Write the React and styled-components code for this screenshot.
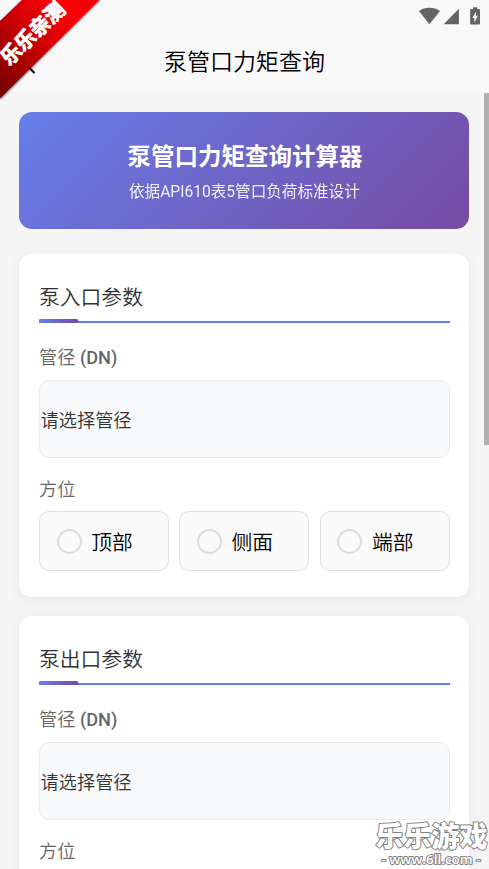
import React from "react";
import styled, { createGlobalStyle } from "styled-components";

const GlobalStyle = createGlobalStyle`
  *, *::before, *::after { box-sizing: border-box; }
  body {
    margin: 0;
    overflow: hidden;
    font-family: Roboto, "Noto Sans CJK SC", sans-serif;
    background: #f5f5f5;
  }
`;

const Screen = styled.div`
  position: relative;
  width: 489px;
  height: 869px;
  overflow: hidden;
  background: #f5f5f5;
`;

const TopBar = styled.header`
  height: 92px;
  background: #f8f8f8;
  display: flex;
  flex-direction: column;
`;

const StatusBar = styled.div`
  height: 32px;
  padding: 7px 8px 0 0;
  display: flex;
  justify-content: flex-end;
`;

const NavBar = styled.div`
  height: 60px;
  display: grid;
  grid-template-columns: 40px 1fr 40px;
  align-items: center;
`;

const BackIcon = styled.svg`
  width: 14px;
  height: 24px;
  margin-left: 22px;
`;

const NavTitle = styled.h1`
  margin: 0;
  padding: 2px 0 0 0;
  font-size: 23px;
  line-height: 34px;
  font-weight: 350;
  text-align: center;
  color: #000;
`;

const Content = styled.main`
  padding: 20px 19.6px 0 19.4px;
`;

const Banner = styled.section`
  height: 116.5px;
  border-radius: 13px;
  padding-top: 28px;
  text-align: center;
  color: #fff;
  background: linear-gradient(135deg, #667eea 0%, #764ba2 100%);
`;

const BannerTitle = styled.h2`
  margin: 0;
  padding-left: 1px;
  font-size: 23.5px;
  line-height: 34px;
  font-weight: 700;
`;

const BannerText = styled.p`
  margin: 6px 0 0;
  font-size: 15.6px;
  line-height: 24px;
  opacity: 0.9;
`;

const Card = styled.section`
  height: 343px;
  margin-top: ${(p) => (p.$first ? "25.5px" : "19px")};
  padding: 26px 19.6px 0;
  border-radius: 13px;
  background: #fff;
  box-shadow: 0 2.6px 15.6px rgba(0, 0, 0, 0.05);
`;

const SectionTitle = styled.h3`
  position: relative;
  margin: 0;
  height: 43px;
  padding-top: 2px;
  border-bottom: 2px solid #667eea;
  font-size: 20.8px;
  line-height: 32px;
  font-weight: 350;
  color: #333;

  &::after {
    content: "";
    position: absolute;
    left: 0;
    bottom: -2px;
    width: 39px;
    height: 4px;
    border-radius: 1.3px;
    background: linear-gradient(90deg, #667eea, #764ba2);
  }
`;

const Label = styled.div`
  height: 26px;
  margin-top: ${(p) => p.$gap};
  font-size: 18.2px;
  line-height: 26px;
  font-weight: 500;
  color: #666;

  span { font-weight: 350; }
`;

const Select = styled.div`
  height: 78px;
  margin-top: 9.5px;
  padding-left: 0.6px;
  display: flex;
  align-items: center;
  border: 1px solid #e9ecef;
  border-radius: 10px;
  background: #f8f9fb;
  font-size: 18.2px;
  font-weight: 350;
  color: #333;
`;

const Options = styled.div`
  display: grid;
  grid-template-columns: repeat(3, 1fr);
  gap: 10.4px;
  margin-top: 8px;
`;

const Option = styled.label`
  height: 60px;
  padding-left: 16.6px;
  display: flex;
  align-items: center;
  gap: 9.6px;
  border: 1px solid #e0e0e0;
  border-radius: 10px;
  background: #fafafa;
  font-size: 20.8px;
  font-weight: 350;
  color: #000;
`;

const Radio = styled.span`
  width: 25px;
  height: 25px;
  border: 2px solid #ddd;
  border-radius: 50%;
`;

const ScrollThumb = styled.div`
  position: absolute;
  top: 93px;
  right: 0;
  width: 5.5px;
  height: 352px;
  background: #b0b0b0;
`;

const Ribbon = styled.svg`
  position: absolute;
  top: 0;
  left: 0;
`;

const Watermark = styled.svg`
  position: absolute;
  right: 0;
  bottom: 0;
`;

const StatusIcons = () => (
  <svg width="63" height="20" viewBox="0 0 63 20" fill="#646464">
    <path d="M1 4.1C4 1.7 7.5.8 11.4.8S19 1.7 22 4.1L11.4 17.2Z" />
    <path d="M40.9 1.8V17.2H25.7Z" />
    <path
      fillRule="evenodd"
      d="M55 .2h4.3v1.7h1.5c.7 0 1.2.5 1.2 1.2v13.3c0 .7-.5 1.2-1.2 1.2h-7.5c-.7 0-1.2-.5-1.2-1.2V3.1c0-.7.5-1.2 1.2-1.2H55ZM58 4.6l-3.6 6.3h2v4.5l3.5-6.7h-2.1Z"
    />
  </svg>
);

const ParamCard = ({ title, first, directions = [] }) => (
  <Card $first={first}>
    <SectionTitle>{title}</SectionTitle>
    <Label $gap="21.5px"><span>管径</span> (DN)</Label>
    <Select>请选择管径</Select>
    <Label $gap="19px"><span>方位</span></Label>
    <Options>
      {directions.map((name) => (
        <Option key={name}>
          <Radio />
          {name}
        </Option>
      ))}
    </Options>
  </Card>
);

export default function App() {
  return (
    <Screen>
      <GlobalStyle />
      <TopBar>
        <StatusBar>
          <StatusIcons />
        </StatusBar>
        <NavBar>
          <BackIcon viewBox="0 0 14 24" fill="none" stroke="#000" strokeWidth="2">
            <path d="M12.5 23 2 12.5 12.5 2" />
          </BackIcon>
          <NavTitle>泵管口力矩查询</NavTitle>
        </NavBar>
      </TopBar>
      <Content>
        <Banner>
          <BannerTitle>泵管口力矩查询计算器</BannerTitle>
          <BannerText>依据API610表5管口负荷标准设计</BannerText>
        </Banner>
        <ParamCard title="泵入口参数" first directions={["顶部", "侧面", "端部"]} />
        <ParamCard title="泵出口参数" />
      </Content>
      <ScrollThumb />
      <Ribbon width="108" height="108" viewBox="0 0 108 108">
        <defs>
          <linearGradient id="ribbonRed" gradientUnits="userSpaceOnUse" x1="0" y1="92" x2="92" y2="0">
            <stop offset="0" stopColor="#760000" />
            <stop offset="0.5" stopColor="#d00004" />
            <stop offset="0.78" stopColor="#fa0208" />
            <stop offset="1" stopColor="#f40006" />
          </linearGradient>
          <filter id="ribbonShadow" x="-10%" y="-10%" width="120%" height="120%">
            <feGaussianBlur stdDeviation="1.3" />
          </filter>
        </defs>
        <path d="M22 0H100L0 100V22Z" fill="#000" opacity="0.55" filter="url(#ribbonShadow)" />
        <path d="M22 0H99.5L0 98.5V21Z" fill="url(#ribbonRed)" />
        <text
          transform="translate(32.5 33) rotate(-44) scale(1 1.04)"
          textAnchor="middle"
          y="7.5"
          fontFamily="Noto Sans CJK SC, sans-serif"
          fontWeight="700"
          fontSize="20"
          fill="#fff"
          stroke="#fff"
          strokeWidth="0.8"
        >
          乐乐亲测
        </text>
      </Ribbon>
      <Watermark width="120" height="52" viewBox="0 0 120 52">
        <g fill="#fff" stroke="#808080" strokeLinejoin="round" paintOrder="stroke" textAnchor="middle">
          <text
            x="62.5"
            y="29.5"
            fontFamily="Noto Sans CJK SC, sans-serif"
            fontWeight="900"
            fontSize="28"
            strokeWidth="2"
            textLength="112"
            lengthAdjust="spacingAndGlyphs"
          >
            乐乐游戏
          </text>
          <text
            x="62"
            y="47"
            fontFamily="Open Sans, sans-serif"
            fontWeight="600"
            fontSize="12"
            strokeWidth="1.8"
            textLength="99"
            lengthAdjust="spacingAndGlyphs"
          >
            - www.6ll.com -
          </text>
        </g>
      </Watermark>
    </Screen>
  );
}
